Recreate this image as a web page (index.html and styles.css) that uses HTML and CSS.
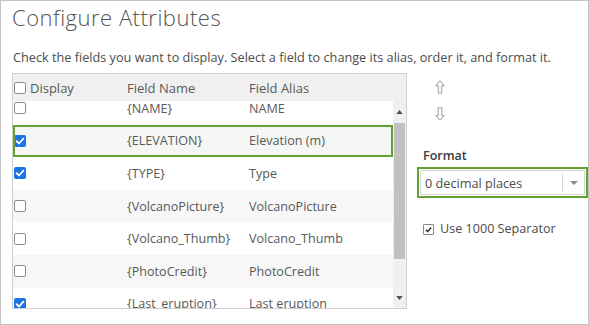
FILE: index.html
```html
<!DOCTYPE html>
<html>
<head>
<meta charset="utf-8">
<link rel="stylesheet" href="styles.css">
</head>
<body>
<div class="frame">
  <h1 class="title">Configure Attributes</h1>
  <p class="desc">Check the fields you want to display. Select a field to change its alias, order it, and format it.</p>
  <div class="main">
    <div class="table">
      <div class="thead">
        <div class="c-display"><span class="cb"></span>Display</div>
        <div class="c-name">Field Name</div>
        <div class="c-alias">Field Alias</div>
      </div>
      <div class="tbody">
        <div class="rows">
          <div class="rows-inner">
            <div class="row"><div class="c-display"><span class="cb"></span></div><div class="c-name">{NAME}</div><div class="c-alias">NAME</div></div>
            <div class="row alt selected"><div class="c-display"><span class="cb on"><svg viewBox="0 0 12 12"><path d="M2.6 6.2 L5 8.5 L9.4 3.6" /></svg></span></div><div class="c-name">{ELEVATION}</div><div class="c-alias">Elevation (m)</div></div>
            <div class="row"><div class="c-display"><span class="cb on"><svg viewBox="0 0 12 12"><path d="M2.6 6.2 L5 8.5 L9.4 3.6" /></svg></span></div><div class="c-name">{TYPE}</div><div class="c-alias">Type</div></div>
            <div class="row alt"><div class="c-display"><span class="cb"></span></div><div class="c-name">{VolcanoPicture}</div><div class="c-alias">VolcanoPicture</div></div>
            <div class="row"><div class="c-display"><span class="cb"></span></div><div class="c-name">{Volcano_Thumb}</div><div class="c-alias">Volcano_Thumb</div></div>
            <div class="row alt"><div class="c-display"><span class="cb"></span></div><div class="c-name">{PhotoCredit}</div><div class="c-alias">PhotoCredit</div></div>
            <div class="row"><div class="c-display"><span class="cb on"><svg viewBox="0 0 12 12"><path d="M2.6 6.2 L5 8.5 L9.4 3.6" /></svg></span></div><div class="c-name">{Last_eruption}</div><div class="c-alias">Last eruption</div></div>
          </div>
        </div>
        <div class="scrollbar">
          <div class="sb-arrow"><svg viewBox="0 0 8 5"><path d="M0 5 L4 0 L8 5 Z"/></svg></div>
          <div class="sb-track"><div class="sb-thumb"></div></div>
          <div class="sb-arrow"><svg viewBox="0 0 8 5"><path d="M0 0 L4 5 L8 0 Z"/></svg></div>
        </div>
      </div>
    </div>
    <div class="side">
      <div class="arrows">
        <svg class="arr" viewBox="0 0 10 14"><path d="M5 0.8 L9.2 5.5 L6.8 5.5 L6.8 13.2 L3.2 13.2 L3.2 5.5 L0.8 5.5 Z"/></svg>
        <svg class="arr" viewBox="0 0 10 14"><path d="M5 13.2 L9.2 8.5 L6.8 8.5 L6.8 0.8 L3.2 0.8 L3.2 8.5 L0.8 8.5 Z"/></svg>
      </div>
      <div class="format-label">Format</div>
      <div class="select-hl">
        <div class="select">
          <span class="select-text">0 decimal places</span>
          <span class="select-btn"><svg viewBox="0 0 8 4"><path d="M0 0 L4 4 L8 0 Z"/></svg></span>
        </div>
      </div>
      <label class="sep"><span class="mini-cb"><svg viewBox="0 0 10 10"><path d="M2 5.2 L4.1 7.3 L8 2.8"/></svg></span>Use 1000 Separator</label>
    </div>
  </div>
</div>
</body>
</html>
```

FILE: styles.css
```css
* { box-sizing: border-box; }
html, body { margin: 0; padding: 0; background: #fff; }
body { font-family: "Open Sans", "Lato", sans-serif; color: #4c4c4c; }

.frame {
  width: 589px;
  height: 325px;
  border: 1px solid #c4c4c4;
  padding: 0 0 0 11px;
  display: flex;
  flex-direction: column;
}

.title {
  margin: 0;
  padding-top: 2px;
  font-size: 22px;
  line-height: 28px;
  font-weight: 300;
  letter-spacing: 0.5px;
  color: #555;
}

.desc {
  margin: 18px 0 0 1px;
  font-size: 12.7px;
  line-height: 16px;
  color: #4c4c4c;
}

.main {
  display: flex;
  margin-top: 8px;
}

.table {
  width: 395px;
  height: 236px;
  border: 1px solid #cfcfcf;
  display: flex;
  flex-direction: column;
}

.thead {
  height: 27px;
  background: #f0f0f0;
  display: flex;
  align-items: center;
  font-size: 13px;
  color: #595959;
  flex: none;
}

.c-display { width: 114px; display: flex; align-items: center; padding-left: 1px; }
.c-name { width: 122px; }
.c-alias { flex: 1; }

.thead .cb { margin-right: 4px; }

.tbody {
  flex: 1;
  display: flex;
  min-height: 0;
}

.rows {
  flex: 1;
  overflow: hidden;
}

.rows-inner { margin-top: -9px; }

.row {
  height: 32.6px;
  display: flex;
  align-items: center;
  font-size: 12.6px;
  color: #595959;
  background: #fff;
}
.row.alt { background: #f7f7f7; }
.row.selected {
  outline: 2px solid #62a232;
  outline-offset: -2px;
  background: #f4f7f4;
}

.cb {
  width: 12px;
  height: 12px;
  border: 1.3px solid #8c8c8c;
  border-radius: 2px;
  background: #fff;
  display: inline-flex;
  align-items: center;
  justify-content: center;
  flex: none;
}
.cb.on {
  border: none;
  background: #1a73e8;
}
.cb svg { width: 12px; height: 12px; }
.cb path { fill: none; stroke: #fff; stroke-width: 1.8; stroke-linecap: round; stroke-linejoin: round; }

.scrollbar {
  width: 13px;
  background: #f0f0f0;
  display: flex;
  flex-direction: column;
  flex: none;
}
.sb-arrow {
  height: 21px;
  display: flex;
  align-items: center;
  justify-content: center;
}
.sb-arrow svg { width: 7px; height: 4px; }
.sb-arrow path { fill: #505050; }
.sb-track { flex: 1; }
.sb-thumb {
  margin: 1px 1px 0 1px;
  height: 136px;
  background: #c1c1c1;
}

.side {
  margin-left: 10px;
  display: flex;
  flex-direction: column;
  width: 171px;
}

.arrows {
  display: flex;
  flex-direction: column;
  gap: 13px;
  padding-left: 18px;
  padding-top: 7px;
}
.arr { width: 10px; height: 14px; }
.arr path { fill: none; stroke: #9a9a9a; stroke-width: 1; }

.format-label {
  margin-top: 27px;
  margin-left: 6px;
  font-size: 12.5px;
  line-height: 16px;
  font-weight: 600;
  color: #3c3c3c;
}

.select-hl {
  margin-top: 3px;
  border: 2px solid #62a232;
  height: 31px;
  padding: 1px;
}
.select {
  height: 100%;
  border: 1px solid #d4d4d4;
  background: #fff;
  display: flex;
  align-items: center;
}
.select-text {
  flex: 1;
  padding-left: 4px;
  font-size: 12.7px;
  color: #4c4c4c;
}
.select-btn {
  width: 22px;
  height: 17px;
  border-left: 1px solid #d4d4d4;
  display: flex;
  align-items: center;
  justify-content: center;
}
.select-btn svg { width: 8px; height: 4px; }
.select-btn path { fill: #8c8c8c; }

.sep {
  margin-top: 23px;
  margin-left: 6px;
  display: flex;
  align-items: center;
  font-size: 12.6px;
  line-height: 16px;
  color: #4c4c4c;
}
.mini-cb {
  width: 11px;
  height: 11px;
  border: 1px solid #8a8a8a;
  border-radius: 1px;
  margin-right: 6px;
  display: inline-flex;
  align-items: center;
  justify-content: center;
}
.mini-cb svg { width: 9px; height: 9px; }
.mini-cb path { fill: none; stroke: #333; stroke-width: 1.6; }
```
